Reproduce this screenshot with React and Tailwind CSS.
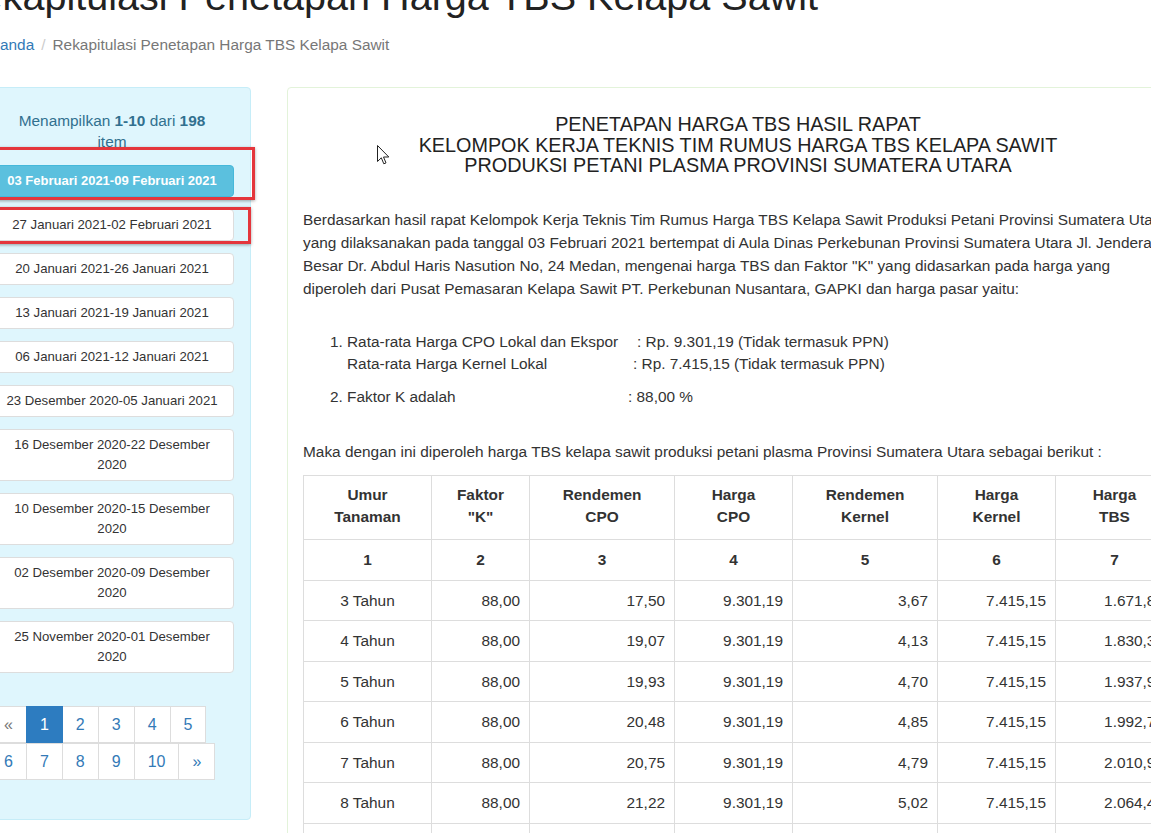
import React from 'react'

const periods = [
  '27 Januari 2021-02 Februari 2021',
  '20 Januari 2021-26 Januari 2021',
  '13 Januari 2021-19 Januari 2021',
  '06 Januari 2021-12 Januari 2021',
  '23 Desember 2020-05 Januari 2021',
  '16 Desember 2020-22 Desember 2020',
  '10 Desember 2020-15 Desember 2020',
  '02 Desember 2020-09 Desember 2020',
  '25 November 2020-01 Desember 2020',
]

const rows = [
  ['3 Tahun', '88,00', '17,50', '9.301,19', '3,67', '7.415,15', '1.671,87'],
  ['4 Tahun', '88,00', '19,07', '9.301,19', '4,13', '7.415,15', '1.830,38'],
  ['5 Tahun', '88,00', '19,93', '9.301,19', '4,70', '7.415,15', '1.937,96'],
  ['6 Tahun', '88,00', '20,48', '9.301,19', '4,85', '7.415,15', '1.992,73'],
  ['7 Tahun', '88,00', '20,75', '9.301,19', '4,79', '7.415,15', '2.010,92'],
  ['8 Tahun', '88,00', '21,22', '9.301,19', '5,02', '7.415,15', '2.064,45'],
  ['9 Tahun', '88,00', '21,64', '9.301,19', '5,22', '7.415,15', '2.112,60'],
]

const headers = [
  ['Umur', 'Tanaman'],
  ['Faktor', '"K"'],
  ['Rendemen', 'CPO'],
  ['Harga', 'CPO'],
  ['Rendemen', 'Kernel'],
  ['Harga', 'Kernel'],
  ['Harga', 'TBS'],
]

const colWidths = ['w-[128px]', 'w-[98px]', 'w-[145px]', 'w-[118px]', 'w-[145px]', 'w-[118px]', 'w-[118px]']

function PageLink({ children, active, muted, first }) {
  return (
    <span
      className={
        'h-[37px] px-[13px] leading-[35px] text-[16px] border ' +
        (first ? '' : '-ml-px ') +
        (active
          ? 'bg-[#2d7cc0] border-[#2d7cc0] text-white relative'
          : muted
          ? 'bg-white border-[#ddd] text-[#777]'
          : 'bg-white border-[#ddd] text-[#337ab7]')
      }
    >
      {children}
    </span>
  )
}

export default function App() {
  return (
    <div className="relative w-[1151px] h-[833px] overflow-hidden bg-white text-[#333] font-['Liberation_Sans',Arial,sans-serif]">
      {/* Title + breadcrumb */}
      <h1 className="ml-[-48px] mt-[-26px] text-[39.6px] leading-[44px] text-[#222] whitespace-nowrap">
        Rekapitulasi Penetapan Harga TBS Kelapa Sawit
      </h1>
      <div className="ml-[-24px] mt-[16px] text-[15.4px] leading-[22px] whitespace-nowrap">
        <span className="text-[#337ab7]">Beranda</span>
        <span className="mx-[7px] text-[#ccc]">/</span>
        <span className="text-[#777]">Rekapitulasi Penetapan Harga TBS Kelapa Sawit</span>
      </div>

      <div className="flex items-start ml-[-27px] mt-[31px] gap-[36px]">
        {/* Left list */}
        <div className="w-[278px] shrink-0">
          <div className="bg-[#dff6fd] border border-[#c6edf8] rounded-[4px] px-[16px] pt-[22px] pb-[39px]">
            <p className="text-center text-[15.4px] leading-[21px] text-[#31708f]">
              Menampilkan <b>1-10</b> dari <b>198</b>
              <br />
              item
            </p>
            <div className="mt-[13px] flex flex-col gap-[12px]">
              <div className="bg-[#5bc0de] border border-[#46b8da] rounded-[4px] py-[5px] leading-[20px] text-center text-[13px] font-bold text-white">
                03 Februari 2021-09 Februari 2021
              </div>
              {periods.map((p) => (
                <div
                  key={p}
                  className="bg-white border border-[#ddd] rounded-[4px] py-[5px] px-[10px] leading-[20px] text-center text-[13.2px] text-[#333]"
                >
                  {p}
                </div>
              ))}
            </div>
            <div className="mt-[33px] flex flex-col">
              <div className="flex">
                <PageLink muted first>«</PageLink>
                <PageLink active>1</PageLink>
                <PageLink>2</PageLink>
                <PageLink>3</PageLink>
                <PageLink>4</PageLink>
                <PageLink>5</PageLink>
              </div>
              <div className="flex">
                <PageLink first>6</PageLink>
                <PageLink>7</PageLink>
                <PageLink>8</PageLink>
                <PageLink>9</PageLink>
                <PageLink>10</PageLink>
                <PageLink>»</PageLink>
              </div>
            </div>
          </div>
          <div className="mt-[3px] bg-white pt-[10px]">
            <div className="border-t-2 border-[#6a9fd0] mr-[12px] h-[20px]"></div>
          </div>
        </div>

        {/* Right content */}
        <div className="w-[902px] shrink-0 bg-white border border-[#e3f3da] rounded-[4px] pl-[15px] pr-[15px] pt-[26px] pb-[20px]">
          <div className="text-center text-[19.8px] leading-[20.5px] text-[#222]">
            PENETAPAN HARGA TBS HASIL RAPAT
            <br />
            KELOMPOK KERJA TEKNIS TIM RUMUS HARGA TBS KELAPA SAWIT
            <br />
            PRODUKSI PETANI PLASMA PROVINSI SUMATERA UTARA
          </div>

          <p className="mt-[32px] text-[15.4px] leading-[23px] whitespace-nowrap">
            Berdasarkan hasil rapat Kelompok Kerja Teknis Tim Rumus Harga TBS Kelapa Sawit Produksi Petani Provinsi Sumatera Utara
            <br />
            yang dilaksanakan pada tanggal 03 Februari 2021 bertempat di Aula Dinas Perkebunan Provinsi Sumatera Utara Jl. Jenderal
            <br />
            Besar Dr. Abdul Haris Nasution No, 24 Medan, mengenai harga TBS dan Faktor "K" yang didasarkan pada harga yang
            <br />
            diperoleh dari Pusat Pemasaran Kelapa Sawit PT. Perkebunan Nusantara, GAPKI dan harga pasar yaitu:
          </p>

          <div className="mt-[31px] text-[15.4px] leading-[22px] whitespace-nowrap">
            <div className="flex">
              <span className="w-[17px] ml-[27px]">1.</span>
              <div>
                <div className="flex">
                  <span className="w-[290px]">Rata-rata Harga CPO Lokal dan Ekspor</span>
                  <span>: Rp. 9.301,19 (Tidak termasuk PPN)</span>
                </div>
                <div className="flex">
                  <span className="w-[286px]">Rata-rata Harga Kernel Lokal</span>
                  <span>: Rp. 7.415,15 (Tidak termasuk PPN)</span>
                </div>
              </div>
            </div>
            <div className="flex mt-[11px]">
              <span className="w-[17px] ml-[27px]">2.</span>
              <span className="w-[281px]">Faktor K adalah</span>
              <span>: 88,00 %</span>
            </div>
          </div>

          <p className="mt-[32px] text-[15.4px] leading-[23px] whitespace-nowrap">
            Maka dengan ini diperoleh harga TBS kelapa sawit produksi petani plasma Provinsi Sumatera Utara sebagai berikut :
          </p>

          <table className="mt-[12px] w-[870px] table-fixed border-collapse text-[15.4px]">
            <thead>
              <tr>
                {headers.map(([a, b], i) => (
                  <th
                    key={i}
                    className={colWidths[i] + ' border border-[#ddd] pt-[8px] pb-[11px] px-[8px] leading-[22px] font-bold text-center'}
                  >
                    {a}
                    <br />
                    {b}
                  </th>
                ))}
              </tr>
              <tr>
                {headers.map((_, i) => (
                  <th key={i} className="border border-[#ddd] py-[9px] leading-[22px] font-bold text-center">
                    {i + 1}
                  </th>
                ))}
              </tr>
            </thead>
            <tbody>
              {rows.map((r) => (
                <tr key={r[0]}>
                  {r.map((v, i) => (
                    <td
                      key={i}
                      className={
                        'border border-[#ddd] py-[9px] leading-[21.6px] ' +
                        (i === 0 ? 'text-center' : 'text-right pr-[9px]')
                      }
                    >
                      {v}
                    </td>
                  ))}
                </tr>
              ))}
            </tbody>
          </table>
        </div>
      </div>

      {/* annotation boxes */}
      <div className="absolute left-[-10px] top-[147px] w-[265px] h-[53px] border-[3px] border-[#e4363c] shadow-[0_1px_3px_rgba(0,0,0,0.35)]"></div>
      <div className="absolute left-[-10px] top-[207px] w-[261px] h-[37px] border-[3px] border-[#e4363c] shadow-[0_1px_3px_rgba(0,0,0,0.35)]"></div>

      {/* mouse cursor */}
      <svg className="absolute left-[377px] top-[145px]" width="13" height="21" viewBox="0 0 13 21">
        <path d="M0.5 0.5 L0.5 16.5 L4.3 12.8 L6.8 18.8 L9 17.9 L6.5 12 L11.8 12 Z" fill="#fff" stroke="#222" strokeWidth="1" strokeLinejoin="round" />
      </svg>
    </div>
  )
}
